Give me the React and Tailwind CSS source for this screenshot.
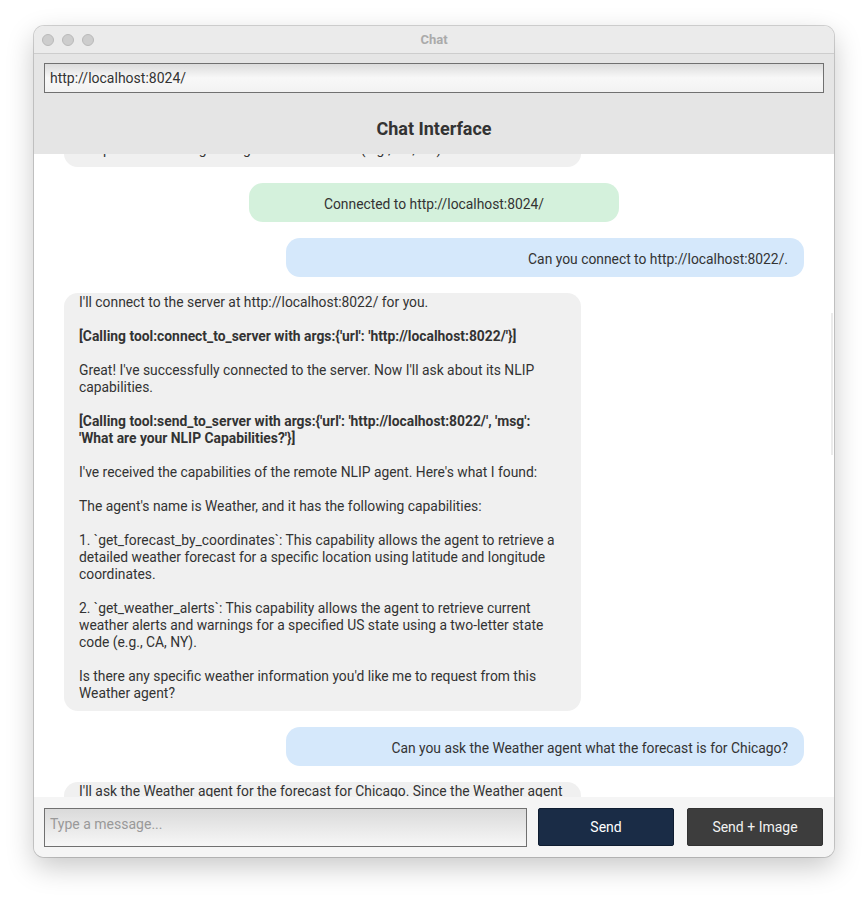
import React from "react";

const font = { fontFamily: "Roboto, 'Liberation Sans', sans-serif" };

function GrayBubble({ paras }) {
  return (
    <div className="self-start ml-[30px] w-[517px] rounded-[14px] bg-[#f0f0f0] px-[15px] pt-[1px] pb-[9px] text-[13.85px] leading-[17px] text-[#333]">
      {paras.map((p, i) => (
        <div key={i} className={i < paras.length - 1 ? "mb-[17px]" : ""}>
          {p.bold ? <span className="font-bold">{p.t}</span> : p.t}
        </div>
      ))}
    </div>
  );
}

function BlueBubble({ text }) {
  return (
    <div className="self-end mr-[30px] w-[518px] rounded-[14px] bg-[#d5e8fb] pl-[16px] pr-[16px] pt-[13px] pb-[9px] text-right text-[13.85px] leading-[17px] text-[#333]">
      {text}
    </div>
  );
}

export default function App() {
  const main = [
    { t: "I'll connect to the server at http://localhost:8022/ for you." },
    { t: "[Calling tool:connect_to_server with args:{'url': 'http://localhost:8022/'}]", bold: true },
    { t: "Great! I've successfully connected to the server. Now I'll ask about its NLIP capabilities." },
    { t: "[Calling tool:send_to_server with args:{'url': 'http://localhost:8022/', 'msg': 'What are your NLIP Capabilities?'}]", bold: true },
    { t: "I've received the capabilities of the remote NLIP agent. Here's what I found:" },
    { t: "The agent's name is Weather, and it has the following capabilities:" },
    { t: "1. `get_forecast_by_coordinates`: This capability allows the agent to retrieve a detailed weather forecast for a specific location using latitude and longitude coordinates." },
    { t: "2. `get_weather_alerts`: This capability allows the agent to retrieve current weather alerts and warnings for a specified US state using a two-letter state code (e.g., CA, NY)." },
    { t: "Is there any specific weather information you'd like me to request from this Weather agent?" },
  ];

  return (
    <div className="min-h-[900px] w-[868px] bg-white pt-[26px] pl-[34px]" style={font}>
      <div className="flex h-[831px] w-[800px] flex-col overflow-hidden rounded-[10px] shadow-[0_0_0_1px_rgba(0,0,0,0.16),0_10px_28px_rgba(0,0,0,0.22)]">
        {/* title bar */}
        <div className="relative flex h-[28px] shrink-0 items-center border-b border-[#cdcdcd] bg-[#ebebeb]">
          <div className="flex gap-[8px] pl-[8px]">
            <span className="h-[12px] w-[12px] rounded-full border border-[#b9b9b9] bg-[#cdcdcd]" />
            <span className="h-[12px] w-[12px] rounded-full border border-[#b9b9b9] bg-[#cdcdcd]" />
            <span className="h-[12px] w-[12px] rounded-full border border-[#b9b9b9] bg-[#cdcdcd]" />
          </div>
          <div className="absolute inset-0 flex items-center justify-center text-[13px] font-bold text-[#aaaaaa]">
            Chat
          </div>
        </div>
        {/* url + header */}
        <div className="shrink-0 bg-[#e5e5e5] px-[10px] pt-[9px]">
          <div className="flex h-[30px] items-center border-[1.5px] border-[#707070] bg-gradient-to-b from-[#dcdcdc] via-[#f8f8f8] to-[#f2f2f2] px-[5px] text-[14px] text-[#333]">
            http://localhost:8024/
          </div>
          <div className="flex h-[61px] items-center justify-center pt-[9px] text-[18px] font-bold text-[#333]">
            Chat Interface
          </div>
        </div>
        {/* messages */}
        <div className="relative h-[643px] shrink-0 overflow-hidden bg-white">
          <div className="-mt-[14px] flex flex-col gap-[16px]">
            <GrayBubble paras={[{ t: "temperature warnings using a two-letter code (e.g., CA, NY)." }]} />
            <div className="self-center flex h-[39px] w-[370px] items-center justify-center rounded-[14px] bg-[#d4f1dc] pt-[4px] text-[13.85px] text-[#333]">
              Connected to http://localhost:8024/
            </div>
            <BlueBubble text="Can you connect to http://localhost:8022/." />
            <GrayBubble paras={main} />
            <BlueBubble text="Can you ask the Weather agent what the forecast is for Chicago?" />
            <GrayBubble paras={[{ t: "I'll ask the Weather agent for the forecast for Chicago. Since the Weather agent needs coordinates, I'll use the latitude and longitude for Chicago." }]} />
          </div>
          <div className="absolute right-[1px] top-[159px] h-[142px] w-[2px] bg-[#ebebeb]" />
        </div>
        {/* bottom bar */}
        <div className="flex flex-1 items-start bg-[#f5f5f5] pl-[10px] pr-[11px] pt-[11px]">
          <div className="h-[39px] w-[483px] border-[1.5px] border-[#707070] bg-gradient-to-b from-[#dadada] to-[#f7f7f7] px-[5px] pt-[5px] text-[14px] text-[#999]">
            Type a message...
          </div>
          <button className="ml-[11px] flex h-[38px] w-[136px] items-center justify-center rounded-[2px] border border-[#0f1d31] bg-[#1a2c46] text-[14px] text-white">
            Send
          </button>
          <button className="ml-[13px] flex h-[38px] w-[136px] items-center justify-center rounded-[2px] border border-[#333] bg-[#3d3d3d] text-[14px] text-[#f2f2f2]">
            Send + Image
          </button>
        </div>
      </div>
    </div>
  );
}
